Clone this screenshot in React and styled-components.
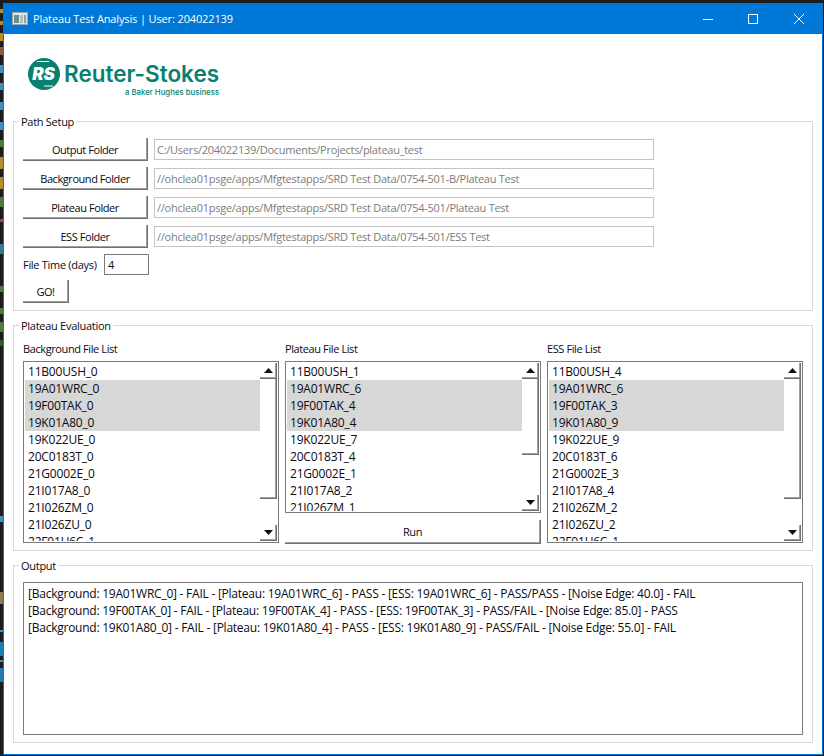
import React from "react";
import styled, { createGlobalStyle, css } from "styled-components";

const Global = createGlobalStyle`
  html, body { margin: 0; padding: 0; background: #1c1c1c; }
  * { box-sizing: border-box; }
`;

const uiFont = css`
  font-family: "Open Sans", "Noto Sans", "Liberation Sans", sans-serif;
  font-size: ${(p) => p.$size || 11}px;
  letter-spacing: ${(p) => p.$ls ?? -0.4}px;
  color: #0a0a14;
  white-space: nowrap;
`;

const raised = css`
  background: #fff;
  border: 0 solid #6f6f6f;
  border-right-width: 1px;
  border-bottom-width: 1px;
  box-shadow: inset -1px -1px 0 #a0a0a0;
`;

const Page = styled.div`
  width: 824px;
  height: 756px;
  display: flex;
  overflow: hidden;
  background: #1c1c1c;
`;

const CodeStrip = styled.div`
  width: 3px;
  flex: none;
  display: flex;
  flex-direction: column;
`;

const CodeMark = styled.span`
  display: block;
  flex: none;
  width: 3px;
  height: ${(p) => p.$h}px;
  margin-top: ${(p) => p.$gap}px;
  background: ${(p) => p.$c};
`;

const Window = styled.div`
  width: 820px;
  height: 752px;
  margin-top: 3px;
  background: #fff;
  border: 1px solid #0078d7;
  border-top: 0;
  display: flex;
  flex-direction: column;
`;

const TitleBar = styled.div`
  height: 31px;
  flex: none;
  margin: 0 -1px;
  background: #0078d7;
  display: flex;
  align-items: center;
  padding-left: 9px;
`;

const TitleText = styled.span`
  ${uiFont}
  color: #fff;
  margin-left: 5px;
  flex: 1;
`;

const Controls = styled.div`
  display: flex;
  height: 100%;
  padding-right: 1px;
`;

const ControlBtn = styled.div`
  width: ${(p) => p.$w || 46}px;
  height: 100%;
  display: flex;
  align-items: center;
  justify-content: center;
`;

const Content = styled.div`
  flex: 1;
  display: flex;
  flex-direction: column;
  padding: 0 9px;
`;

const LogoArea = styled.div`
  height: 79px;
  flex: none;
  padding: 23px 0 0 14px;
  display: flex;
  gap: 3px;
`;

const LogoText = styled.div`
  display: flex;
  flex-direction: column;
  align-items: flex-end;
  padding-top: 2px;
`;

const LogoName = styled.div`
  font-family: "Inter", "Lato", sans-serif;
  font-weight: 600;
  font-size: 22.5px;
  line-height: 30px;
  color: #08806f;
  white-space: nowrap;
`;

const LogoSub = styled.div`
  font-family: "Inter", "Lato", sans-serif;
  font-weight: 500;
  font-size: 7.8px;
  line-height: 12px;
  color: #08806f;
  margin-top: -3px;
  white-space: nowrap;
`;

const Group = styled.fieldset`
  margin: 0 0 ${(p) => p.$after}px;
  padding: ${(p) => p.$top}px 9px 0;
  border: 1px solid #d9d9d9;
  height: ${(p) => p.$h}px;
  min-width: 0;
  flex: none;
`;

const GroupTitle = styled.legend`
  ${uiFont}
  height: 16px;
  line-height: 17px;
  margin-left: -4px;
  padding: 0 2px;
`;

const FolderRow = styled.div`
  display: flex;
  align-items: center;
  gap: 6px;
  height: 23px;
  margin-bottom: 6px;
`;

const PushButton = styled.div`
  ${uiFont}
  ${raised}
  width: ${(p) => p.$w};
  height: 23px;
  flex: none;
  padding-top: 1px;
  display: flex;
  align-items: center;
  justify-content: center;
`;

const PathField = styled.div`
  ${uiFont}
  color: #7c7c7c;
  width: 500px;
  height: 21px;
  border: 1px solid #c4c4c4;
  padding-left: 2px;
  line-height: 19px;
`;

const TimeRow = styled.div`
  display: flex;
  align-items: center;
  height: 21px;
  margin-bottom: 5px;
`;

const Label = styled.span`
  ${uiFont}
  display: block;
`;

const TimeLabel = styled(Label)`
  width: 81px;
`;

const TimeField = styled.div`
  ${uiFont}
  width: 45px;
  height: 21px;
  border: 1px solid #7a7a7a;
  padding-left: 3px;
  line-height: 19px;
`;

const ListGrid = styled.div`
  display: grid;
  grid-template-columns: repeat(3, 256px);
  column-gap: 6px;
`;

const Column = styled.div`
  display: flex;
  flex-direction: column;
`;

const ColumnLabel = styled(Label)`
  line-height: 16px;
  height: 20px;
`;

const ListBox = styled.div`
  height: ${(p) => p.$h}px;
  border: 1px solid #7a7a7a;
  padding: 1px;
  display: flex;
  overflow: hidden;
`;

const Rows = styled.div`
  flex: 1;
  min-width: 0;
  overflow: hidden;
`;

const Row = styled.div`
  ${uiFont}
  height: 17px;
  line-height: 17px;
  padding-left: 3px;
  background: ${(p) => (p.$on ? "#d7d7d7" : "transparent")};
`;

const ScrollBar = styled.div`
  width: 17px;
  flex: none;
  display: flex;
  flex-direction: column;
`;

const ArrowBtn = styled.div`
  ${raised}
  height: ${(p) => p.$h}px;
  flex: none;
  display: flex;
  align-items: center;
  justify-content: center;
`;

const Handle = styled.div`
  ${raised}
  height: ${(p) => p.$h}px;
  flex: none;
`;

const Track = styled.div`
  flex: 1;
`;

const RunButton = styled(PushButton)`
  width: 256px;
  height: 24px;
  margin-top: 7px;
  padding-top: 0;
`;

const OutputBox = styled.div`
  width: 780px;
  height: 153px;
  border: 1px solid #7a7a7a;
  padding: 2px 4px;
`;

const OutputLine = styled.div`
  ${uiFont}
  height: 17px;
  line-height: 17px;
`;

const Arrow = ({ down }) => (
  <svg width="9" height="5" viewBox="0 0 9 5">
    <path d={down ? "M0 0h9L4.5 5z" : "M4.5 0L9 5H0z"} fill="#111" />
  </svg>
);

const List = ({ items, height, handle }) => (
  <ListBox $h={height}>
    <Rows>
      {items.map((t, i) => (
        <Row key={t} $size={12} $ls={-0.2} $on={i >= 1 && i <= 3}>{t}</Row>
      ))}
    </Rows>
    <ScrollBar>
      <ArrowBtn $h={16}><Arrow /></ArrowBtn>
      <Handle $h={handle} />
      <Track />
      <ArrowBtn $h={16}><Arrow down /></ArrowBtn>
    </ScrollBar>
  </ListBox>
);

const marks = [
  [9, 4, "#b58d2a"], [8, 4, "#b58d2a"], [8, 8, "#b58d2a"], [6, 8, "#8f5a44"], [10, 8, "#3f8fc4"],
  [10, 7, "#3f8fc4"], [12, 8, "#3f8fc4"], [12, 8, "#3f8fc4"], [10, 7, "#4f7a42"], [10, 12, "#b58d2a"],
  [8, 12, "#b58d2a"], [8, 10, "#4f7a42"], [12, 3, "#a04a42"], [22, 10, "#357a90"], [32, 6, "#4f7a42"],
  [16, 6, "#4f7a42"], [8, 10, "#4f7a42"], [8, 6, "#35592f"], [170, 6, "#3f8fc4"], [70, 12, "#8f7a50"],
  [26, 2, "#3f8fc4"], [10, 14, "#1f7fb0"], [4, 2, "#3f8fc4"], [6, 14, "#1f7fb0"],
];

const suffix = (arr) => ["11B00USH", "19A01WRC", "19F00TAK", "19K01A80", "19K022UE", "20C0183T", "21G0002E", "21I017A8", "21I026ZM", "21I026ZU", "22F01U6C"]
  .slice(0, arr.length).map((n, i) => `${n}_${arr[i]}`);

const folders = [
  ["Output Folder", "C:/Users/204022139/Documents/Projects/plateau_test"],
  ["Background Folder", "//ohclea01psge/apps/Mfgtestapps/SRD Test Data/0754-501-B/Plateau Test"],
  ["Plateau Folder", "//ohclea01psge/apps/Mfgtestapps/SRD Test Data/0754-501/Plateau Test"],
  ["ESS Folder", "//ohclea01psge/apps/Mfgtestapps/SRD Test Data/0754-501/ESS Test"],
];

const output = [
  "[Background: 19A01WRC_0] - FAIL - [Plateau: 19A01WRC_6] - PASS - [ESS: 19A01WRC_6] - PASS/PASS - [Noise Edge: 40.0] - FAIL",
  "[Background: 19F00TAK_0] - FAIL - [Plateau: 19F00TAK_4] - PASS - [ESS: 19F00TAK_3] - PASS/FAIL - [Noise Edge: 85.0] - PASS",
  "[Background: 19K01A80_0] - FAIL - [Plateau: 19K01A80_4] - PASS - [ESS: 19K01A80_9] - PASS/FAIL - [Noise Edge: 55.0] - FAIL",
];

export default function App() {
  return (
    <Page>
      <Global />
      <CodeStrip>
        {marks.map(([g, h, c], i) => <CodeMark key={i} $gap={g} $h={h} $c={c} />)}
      </CodeStrip>
      <Window>
        <TitleBar>
          <svg width="16" height="13" viewBox="0 0 16 13">
            <rect x="0.5" y="0.5" width="15" height="12" fill="#dfe7ea" stroke="#9aa6ad" />
            <rect x="2" y="3" width="5" height="8" fill="#6f8f86" />
            <rect x="8" y="3" width="3" height="8" fill="#a9c4b6" />
            <rect x="12" y="3" width="2" height="8" fill="#8fa1ad" />
          </svg>
          <TitleText $ls={-0.13}>Plateau Test Analysis | User: 204022139</TitleText>
          <Controls>
            <ControlBtn $w={45}>
              <svg width="10" height="10" viewBox="0 0 10 10"><path d="M0 5.5h10" stroke="#fff" fill="none" /></svg>
            </ControlBtn>
            <ControlBtn>
              <svg width="10" height="10" viewBox="0 0 10 10"><rect x="0.5" y="0.5" width="9" height="9" stroke="#fff" fill="none" /></svg>
            </ControlBtn>
            <ControlBtn>
              <svg width="10" height="10" viewBox="0 0 10 10"><path d="M0 0l10 10M10 0L0 10" stroke="#fff" fill="none" /></svg>
            </ControlBtn>
          </Controls>
        </TitleBar>
        <Content>
          <LogoArea>
            <svg width="34" height="34" viewBox="0 0 34 34">
              <circle cx="17" cy="17" r="16" fill="#08806f" />
              <path d="M10 4.5h12M26 29h-9" stroke="#fff" strokeWidth="1.2" fill="none" />
              <text x="16.5" y="23" textAnchor="middle" fontFamily="Inter, sans-serif" fontStyle="italic" fontWeight="900" fontSize="17" fill="#fff">RS</text>
            </svg>
            <LogoText>
              <LogoName>Reuter-Stokes</LogoName>
              <LogoSub>a Baker Hughes business</LogoSub>
            </LogoText>
          </LogoArea>
          <Group $h={198} $top={9} $after={6}>
            <GroupTitle $ls={-0.28}>Path Setup</GroupTitle>
            {folders.map(([b, p]) => (
              <FolderRow key={b}>
                <PushButton $w="125px" $ls={-0.44}>{b}</PushButton>
                <PathField $ls={-0.26}>{p}</PathField>
              </FolderRow>
            ))}
            <TimeRow>
              <TimeLabel $ls={-0.3}>File Time (days)</TimeLabel>
              <TimeField $ls={0}>4</TimeField>
            </TimeRow>
            <PushButton $w="46px" $ls={-0.44}>GO!</PushButton>
          </Group>
          <Group $h={234} $top={8} $after={6}>
            <GroupTitle $ls={-0.28}>Plateau Evaluation</GroupTitle>
            <ListGrid>
              <Column>
                <ColumnLabel>Background File List</ColumnLabel>
                <List height={182} handle={120} items={suffix([0, 0, 0, 0, 0, 0, 0, 0, 0, 0, 1])} />
              </Column>
              <Column>
                <ColumnLabel>Plateau File List</ColumnLabel>
                <List height={152} handle={76} items={suffix([1, 6, 4, 4, 7, 4, 1, 2, 1])} />
                <RunButton $ls={-0.44}>Run</RunButton>
              </Column>
              <Column>
                <ColumnLabel>ESS File List</ColumnLabel>
                <List height={182} handle={120} items={suffix([4, 6, 3, 9, 9, 6, 3, 4, 2, 2, 1])} />
              </Column>
            </ListGrid>
          </Group>
          <Group $h={186} $top={9} $after={0}>
            <GroupTitle $ls={-0.28}>Output</GroupTitle>
            <OutputBox>
              {output.map((l) => <OutputLine key={l} $size={12} $ls={-0.24}>{l}</OutputLine>)}
            </OutputBox>
          </Group>
        </Content>
      </Window>
    </Page>
  );
}
